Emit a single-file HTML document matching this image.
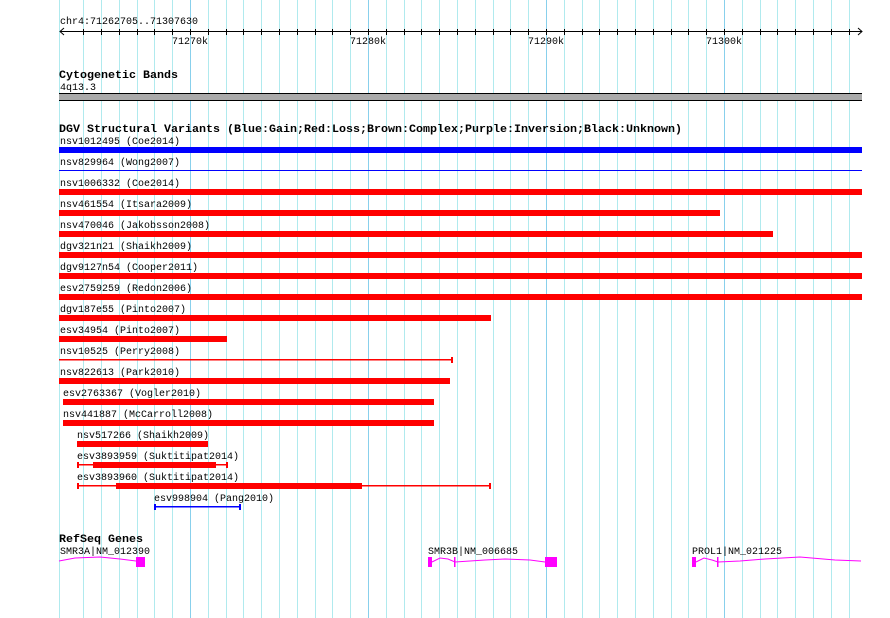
<!DOCTYPE html>
<html><head><meta charset="utf-8"><style>
html,body{margin:0;padding:0;background:#fff;width:890px;height:618px;overflow:hidden}
svg text{font-family:"Liberation Mono",monospace;font-size:10px;fill:#000}
.b{font-weight:bold;font-size:11px}
</style></head><body>
<svg width="890" height="618" xmlns="http://www.w3.org/2000/svg">
<path stroke="#b0eaee" stroke-width="1" fill="none" d="M59.5 0V618M83.5 0V618M101.5 0V618M119.5 0V618M137.5 0V618M154.5 0V618M172.5 0V618M208.5 0V618M226.5 0V618M243.5 0V618M261.5 0V618M279.5 0V618M297.5 0V618M315.5 0V618M332.5 0V618M350.5 0V618M386.5 0V618M404.5 0V618M421.5 0V618M439.5 0V618M457.5 0V618M475.5 0V618M493.5 0V618M510.5 0V618M528.5 0V618M564.5 0V618M582.5 0V618M599.5 0V618M617.5 0V618M635.5 0V618M653.5 0V618M671.5 0V618M688.5 0V618M706.5 0V618M742.5 0V618M760.5 0V618M777.5 0V618M795.5 0V618M813.5 0V618M831.5 0V618M849.5 0V618"/>
<path stroke="#88d0ec" stroke-width="1" fill="none" d="M190.5 0V618M368.5 0V618M546.5 0V618M724.5 0V618"/>
<text x="60" y="24">chr4:71262705..71307630</text>
<line x1="60" y1="31.5" x2="862" y2="31.5" stroke="#000"/>
<polyline points="64,28 60,31.5 64,35" fill="none" stroke="#000"/>
<polyline points="858,28 862,31.5 858,35" fill="none" stroke="#000"/>
<path stroke="#000" fill="none" d="M83.5 29V35M101.5 29V35M119.5 29V35M137.5 29V35M154.5 29V35M172.5 29V35M190.5 29V35M208.5 29V35M226.5 29V35M243.5 29V35M261.5 29V35M279.5 29V35M297.5 29V35M315.5 29V35M332.5 29V35M350.5 29V35M368.5 29V35M386.5 29V35M404.5 29V35M421.5 29V35M439.5 29V35M457.5 29V35M475.5 29V35M493.5 29V35M510.5 29V35M528.5 29V35M546.5 29V35M564.5 29V35M582.5 29V35M599.5 29V35M617.5 29V35M635.5 29V35M653.5 29V35M671.5 29V35M688.5 29V35M706.5 29V35M724.5 29V35M742.5 29V35M760.5 29V35M777.5 29V35M795.5 29V35M813.5 29V35M831.5 29V35M849.5 29V35"/>
<text x="172" y="44">71270k</text>
<text x="350" y="44">71280k</text>
<text x="528" y="44">71290k</text>
<text x="706" y="44">71300k</text>

<text class="b" x="59" y="78" textLength="119" lengthAdjust="spacingAndGlyphs">Cytogenetic Bands</text>
<text x="60" y="90">4q13.3</text>
<rect x="59" y="93" width="803" height="7" fill="#aaa"/>
<line x1="59" y1="93.5" x2="862" y2="93.5" stroke="#000"/>
<line x1="59" y1="100.5" x2="862" y2="100.5" stroke="#000"/>

<text class="b" x="59" y="132" textLength="623" lengthAdjust="spacingAndGlyphs">DGV Structural Variants (Blue:Gain;Red:Loss;Brown:Complex;Purple:Inversion;Black:Unknown)</text>

<text x="60" y="144">nsv1012495 (Coe2014)</text>
<rect x="59" y="147" width="803" height="6" fill="#0000ff"/>
<text x="60" y="165">nsv829964 (Wong2007)</text>
<rect x="59" y="170" width="803" height="1" fill="#0000ff"/>
<text x="60" y="186">nsv1006332 (Coe2014)</text>
<rect x="59" y="189" width="803" height="6" fill="#ff0000"/>
<text x="60" y="207">nsv461554 (Itsara2009)</text>
<rect x="59" y="210" width="661" height="6" fill="#ff0000"/>
<text x="60" y="228">nsv470046 (Jakobsson2008)</text>
<rect x="59" y="231" width="714" height="6" fill="#ff0000"/>
<text x="60" y="249">dgv321n21 (Shaikh2009)</text>
<rect x="59" y="252" width="803" height="6" fill="#ff0000"/>
<text x="60" y="270">dgv9127n54 (Cooper2011)</text>
<rect x="59" y="273" width="803" height="6" fill="#ff0000"/>
<text x="60" y="291">esv2759259 (Redon2006)</text>
<rect x="59" y="294" width="803" height="6" fill="#ff0000"/>
<text x="60" y="312">dgv187e55 (Pinto2007)</text>
<rect x="59" y="315" width="432" height="6" fill="#ff0000"/>
<text x="60" y="333">esv34954 (Pinto2007)</text>
<rect x="59" y="336" width="168" height="6" fill="#ff0000"/>
<text x="60" y="354">nsv10525 (Perry2008)</text>
<rect x="59" y="359" width="394" height="1.5" fill="#ff0000"/>
<rect x="451" y="357" width="2" height="6" fill="#ff0000"/>
<text x="60" y="375">nsv822613 (Park2010)</text>
<rect x="59" y="378" width="391" height="6" fill="#ff0000"/>
<text x="63" y="396">esv2763367 (Vogler2010)</text>
<rect x="63" y="399" width="371" height="6" fill="#ff0000"/>
<text x="63" y="417">nsv441887 (McCarroll2008)</text>
<rect x="63" y="420" width="371" height="6" fill="#ff0000"/>
<text x="77" y="438">nsv517266 (Shaikh2009)</text>
<rect x="77" y="441" width="131" height="6" fill="#ff0000"/>
<text x="77" y="459">esv3893959 (Suktitipat2014)</text>
<rect x="77" y="464" width="151" height="1.5" fill="#ff0000"/>
<rect x="77" y="462" width="2" height="6" fill="#ff0000"/>
<rect x="226" y="462" width="2" height="6" fill="#ff0000"/>
<rect x="93" y="462" width="123" height="6" fill="#ff0000"/>
<text x="77" y="480">esv3893960 (Suktitipat2014)</text>
<rect x="77" y="485" width="414" height="1.5" fill="#ff0000"/>
<rect x="77" y="483" width="2" height="6" fill="#ff0000"/>
<rect x="489" y="483" width="2" height="6" fill="#ff0000"/>
<rect x="116" y="483" width="246" height="6" fill="#ff0000"/>
<text x="154" y="501">esv998904 (Pang2010)</text>
<rect x="154" y="506" width="86" height="1.5" fill="#0000ff"/>
<rect x="154" y="504" width="2" height="6" fill="#0000ff"/>
<rect x="239" y="504" width="2" height="6" fill="#0000ff"/>

<text class="b" x="59" y="542" textLength="84" lengthAdjust="spacingAndGlyphs">RefSeq Genes</text>
<text x="60" y="554">SMR3A|NM_012390</text>
<polyline points="59,561 75,558 100,557 120,559 136,561" fill="none" stroke="#ff00ff" stroke-width="1"/>
<rect x="136" y="557" width="9" height="10" fill="#ff00ff"/>
<text x="428" y="554">SMR3B|NM_006685</text>
<rect x="428" y="557" width="4" height="10" fill="#ff00ff"/>
<polyline points="432,562 440,558 448,559 455,562 470,561 485,560 505,559 530,560 545,562" fill="none" stroke="#ff00ff"/>
<rect x="454" y="557" width="1.5" height="10" fill="#ff00ff"/>
<rect x="545" y="557" width="12" height="10" fill="#ff00ff"/>
<text x="692" y="554">PROL1|NM_021225</text>
<rect x="692" y="557" width="4" height="10" fill="#ff00ff"/>
<polyline points="696,562 704,558 712,560 718,562 740,561 765,559 800,557 835,560 861,561" fill="none" stroke="#ff00ff"/>
<rect x="717" y="557" width="1.5" height="10" fill="#ff00ff"/>
</svg>
</body></html>
